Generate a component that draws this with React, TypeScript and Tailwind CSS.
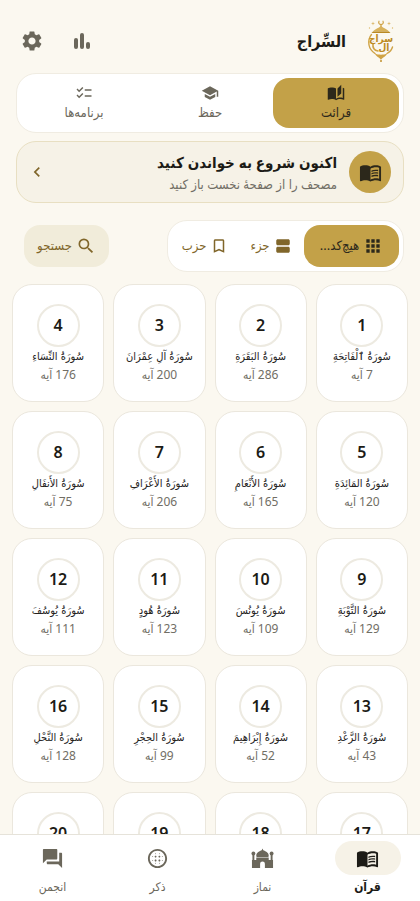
import { useState } from 'react'
import type { ComponentType } from 'react'
import {
  MdApps,
  MdAutoStories,
  MdBlurCircular,
  MdBookmarkBorder,
  MdChecklist,
  MdChevronLeft,
  MdForum,
  MdMenuBook,
  MdSchool,
  MdSearch,
  MdSettings,
  MdViewAgenda,
} from 'react-icons/md'

interface Surah {
  id: number
  name: string
  ayahs: number
}

interface TabItem {
  label: string
  icon: ComponentType<{ className?: string }>
}

const surahs: Surah[] = [
  { id: 1, name: 'سُورَةُ ٱلْفَاتِحَةِ', ayahs: 7 },
  { id: 2, name: 'سُورَةُ البَقَرَةِ', ayahs: 286 },
  { id: 3, name: 'سُورَةُ آلِ عِمْرَانَ', ayahs: 200 },
  { id: 4, name: 'سُورَةُ النِّسَاءِ', ayahs: 176 },
  { id: 5, name: 'سُورَةُ المَائِدَةِ', ayahs: 120 },
  { id: 6, name: 'سُورَةُ الأَنْعَامِ', ayahs: 165 },
  { id: 7, name: 'سُورَةُ الأَعْرَافِ', ayahs: 206 },
  { id: 8, name: 'سُورَةُ الأَنفَالِ', ayahs: 75 },
  { id: 9, name: 'سُورَةُ التَّوْبَةِ', ayahs: 129 },
  { id: 10, name: 'سُورَةُ يُونُسَ', ayahs: 109 },
  { id: 11, name: 'سُورَةُ هُودٍ', ayahs: 123 },
  { id: 12, name: 'سُورَةُ يُوسُفَ', ayahs: 111 },
  { id: 13, name: 'سُورَةُ الرَّعْدِ', ayahs: 43 },
  { id: 14, name: 'سُورَةُ إِبْرَاهِيمَ', ayahs: 52 },
  { id: 15, name: 'سُورَةُ الحِجْرِ', ayahs: 99 },
  { id: 16, name: 'سُورَةُ النَّحْلِ', ayahs: 128 },
  { id: 17, name: 'سُورَةُ الإِسْرَاءِ', ayahs: 111 },
  { id: 18, name: 'سُورَةُ الكَهْفِ', ayahs: 110 },
  { id: 19, name: 'سُورَةُ مَرْيَمَ', ayahs: 98 },
  { id: 20, name: 'سُورَةُ طه', ayahs: 135 },
]

const modes: TabItem[] = [
  { label: 'قرائت', icon: MdAutoStories },
  { label: 'حفظ', icon: MdSchool },
  { label: 'برنامه‌ها', icon: MdChecklist },
]

const navItems: TabItem[] = [
  { label: 'قرآن', icon: MdMenuBook },
  { label: 'نماز', icon: MosqueIcon },
  { label: 'ذکر', icon: MdBlurCircular },
  { label: 'انجمن', icon: MdForum },
]

function Logo() {
  return (
    <svg viewBox="0 0 30 44" className="h-11 w-[30px]" aria-hidden="true">
      <g fill="none" stroke="#cfa347" strokeLinecap="round">
        <path d="M13 2.200a2.300 2.300 0 1 0 4 0" strokeWidth="1.200" />
        <path d="M15 5v3" strokeWidth="1.200" />
        <path d="M5.500 15.500C3 18.500 2.300 22 3 26c.7 4 3 6.500 6 8.500" strokeWidth="1.400" />
        <path d="M26.500 28c-.8 3-2.800 5-5.500 6.500" strokeWidth="1.400" />
        <path d="M7 25c-.5 4 1.500 6.500 5 7" strokeWidth="1.600" />
      </g>
      <path d="M15 6.500c1 2.500 6 3 8 6H7c2-3 7-3.500 8-6z" fill="#d8b25c" />
      <path d="M7 12.500h16l1.500 1.500h-19z" fill="#b98924" />
      <path d="M9 34.500c3 1.600 9 1.600 12 0-1 3.500-4.500 3.500-6 6.500-1.500-3-5-3-6-6.500z" fill="#d0a345" />
      <circle cx="15" cy="42" r="1" fill="#c0902c" />
      <g fill="#dcb96c">
        <path d="M7 2.500l.5 1.500 1.500.5-1.500.5L7 6.500 6.500 5 5 4.500 6.500 4z" />
        <path d="M23 2.500l.5 1.500 1.500.5-1.500.5-.5 1.500-.5-1.500-1.500-.5 1.500-.5z" />
        <circle cx="3.500" cy="9" r=".7" />
        <circle cx="26.500" cy="9" r=".7" />
      </g>
      <g
        fill="#bd8b22"
        fontFamily="DejaVu Sans Condensed, DejaVu Sans, sans-serif"
        fontWeight="700"
        textAnchor="middle"
      >
        <text x="15" y="23" fontSize="10">سراج</text>
        <text x="18" y="32" fontSize="10">ال</text>
      </g>
    </svg>
  )
}

function ChartIcon() {
  return (
    <svg viewBox="0 0 24 24" className="size-6" fill="currentColor" aria-hidden="true">
      <rect x="4" y="9" width="4" height="11" rx="2" />
      <rect x="10" y="4" width="4" height="16" rx="2" />
      <rect x="16" y="13" width="4" height="7" rx="2" />
    </svg>
  )
}

function MosqueIcon({ className }: { className?: string }) {
  return (
    <svg viewBox="0 0 24 24" className={className} fill="currentColor" aria-hidden="true">
      <path d="M12 1.500l.8 2c2 .8 5.700 2.300 5.700 5.500 0 .7-.2 1.200-.5 1.500H6c-.3-.3-.5-.8-.5-1.500 0-3.200 3.700-4.700 5.700-5.500z" />
      <path d="M5.500 11h13v2.500H23V22h-8.500v-4.500a2.500 2.500 0 0 0-5 0V22H1v-8.500h4.500z" />
      <circle cx="2.500" cy="6.800" r="2" />
      <circle cx="21.500" cy="6.800" r="2" />
      <path d="M1.500 8h2v6h-2zM20.500 8h2v6h-2z" />
    </svg>
  )
}

function SurahCard({ surah }: { surah: Surah }) {
  return (
    <button
      type="button"
      className="flex h-[118px] min-w-0 flex-col items-center justify-center rounded-[20px] border border-[#ebe7dd] bg-white"
    >
      <span className="flex size-[43px] shrink-0 items-center justify-center rounded-full border-2 border-[#edeae1] text-base font-semibold text-[#1c1b16]">
        {surah.id}
      </span>
      <span className="whitespace-nowrap font-['DejaVu_Sans_Condensed','DejaVu_Sans',sans-serif] text-[11px] leading-5 text-[#24221c]">
        {surah.name}
      </span>
      <span className="whitespace-nowrap text-xs leading-4">{surah.ayahs} آیه</span>
    </button>
  )
}

export default function App() {
  const [mode, setMode] = useState(0)
  const [page, setPage] = useState(0)

  return (
    <div
      dir="rtl"
      lang="fa"
      className="flex h-screen flex-col bg-[#fbf8f0] font-['Noto_Sans','DejaVu_Sans_Condensed','DejaVu_Sans',sans-serif] text-[#716e65]"
    >
      <main className="min-h-0 flex-1 overflow-y-auto [scrollbar-width:none]">
        {/* Header */}
        <header className="flex h-[73px] items-center justify-between px-5 pt-2">
          <div className="flex items-center gap-5 pr-1">
            <Logo />
            <h1 className="text-base font-bold text-[#1c1b16]">السِّراج</h1>
          </div>
          <div className="flex items-center gap-[26px] text-[#6b675b]">
            <button type="button" aria-label="آمار">
              <ChartIcon />
            </button>
            <button type="button" aria-label="تنظیمات">
              <MdSettings className="size-6" />
            </button>
          </div>
        </header>

        {/* Reading modes */}
        <div className="mx-4 flex h-[60px] rounded-[20px] border border-[#f0ece2] bg-white p-1">
          {modes.map(({ label, icon: Icon }, index) => (
            <button
              key={label}
              type="button"
              onClick={() => setMode(index)}
              className={`flex flex-1 flex-col items-center justify-center rounded-2xl text-[13px] leading-5 ${
                mode === index ? 'bg-[#c3a148] text-[#2c281b]' : 'text-[#6b675b]'
              }`}
            >
              <Icon className="size-[18px]" />
              {label}
            </button>
          ))}
        </div>

        {/* Start reading */}
        <button
          type="button"
          className="mx-4 mt-2 flex h-[62px] w-[calc(100%-32px)] items-center gap-3 rounded-[20px] border border-[#e8dfc2] bg-[#f6f2e7] pr-3 pl-2.5 text-right"
        >
          <span className="flex size-[42px] items-center justify-center rounded-full bg-[#c3a148] text-[#2c281b]">
            <MdMenuBook className="size-[23px]" />
          </span>
          <span className="flex flex-1 flex-col whitespace-nowrap">
            <span className="text-[15px] leading-6 font-bold text-[#1c1b16]">
              اکنون شروع به خواندن کنید
            </span>
            <span className="text-[13px] leading-5">مصحف را از صفحهٔ نخست باز کنید</span>
          </span>
          <MdChevronLeft className="size-5 text-[#80662a]" />
        </button>

        {/* Grouping and search */}
        <div className="mx-4 mt-[17px] flex items-center justify-between text-[13px] text-[#80662a]">
          <div className="flex h-[52px] rounded-[20px] border border-[#f0ece2] bg-white p-1">
            <button
              type="button"
              className="flex w-[95px] items-center justify-center gap-1 rounded-2xl bg-[#c3a148] text-[#2c281b]"
            >
              <MdApps className="size-5" />
              هیچ‌کد...
            </button>
            <button type="button" className="flex w-[66px] items-center justify-center gap-1">
              <MdViewAgenda className="size-[18px]" />
              جزء
            </button>
            <button type="button" className="flex w-[66px] items-center justify-center gap-1">
              <MdBookmarkBorder className="size-[18px]" />
              حزب
            </button>
          </div>
          <button
            type="button"
            className="ml-2 flex h-[42px] w-[85px] items-center justify-center gap-1 rounded-2xl bg-[#f1ecda]"
          >
            <MdSearch className="size-5" />
            جستجو
          </button>
        </div>

        {/* Surah grid */}
        <div className="grid grid-cols-4 gap-[9px] px-3 pt-3 pb-3">
          {surahs.map((surah) => (
            <SurahCard key={surah.id} surah={surah} />
          ))}
        </div>
      </main>

      {/* Bottom navigation */}
      <nav className="flex h-[67px] shrink-0 border-t border-[#e6e3da] bg-white">
        {navItems.map(({ label, icon: Icon }, index) => (
          <button
            key={label}
            type="button"
            onClick={() => setPage(index)}
            className={`flex flex-1 flex-col items-center gap-1 pt-[6px] text-xs leading-4 ${
              page === index ? 'font-bold text-[#1c1b16]' : 'text-[#6b675b]'
            }`}
          >
            <span
              className={`flex h-[34px] w-[66px] items-center justify-center rounded-full ${
                page === index ? 'bg-[#f6f2e7]' : ''
              }`}
            >
              <Icon className="size-[23px]" />
            </span>
            {label}
          </button>
        ))}
      </nav>
    </div>
  )
}
